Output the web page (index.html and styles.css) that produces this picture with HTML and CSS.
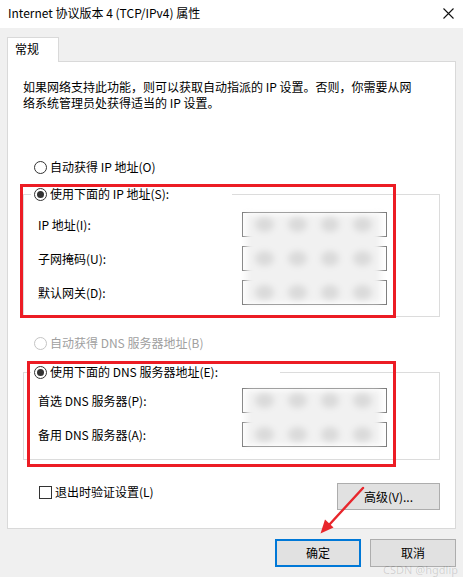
FILE: index.html
```html
<!DOCTYPE html>
<html lang="zh-CN">
<head>
<meta charset="utf-8">
<title>Internet 协议版本 4 (TCP/IPv4) 属性</title>
<link rel="stylesheet" href="styles.css">
</head>
<body>
<div class="window">
  <div class="titlebar">
    <span class="title">Internet 协议版本 4 (TCP/IPv4) 属性</span>
    <svg class="close" width="11" height="11" viewBox="0 0 11 11"><path d="M0.5 0.5 L10.5 10.5 M10.5 0.5 L0.5 10.5" stroke="#111" stroke-width="1.1" fill="none"/></svg>
  </div>
  <div class="main">
    <div class="tabs"><div class="tab">常规</div></div>
    <div class="panel">
      <p class="desc">如果网络支持此功能，则可以获取自动指派的 IP 设置。否则，你需要从网<br>络系统管理员处获得适当的 IP 设置。</p>
      <div class="radio-row auto-ip"><span class="radio"></span><span>自动获得 IP 地址(O)</span></div>
      <fieldset class="group ip-group">
        <legend class="radio-row legend-ip"><span class="radio checked"></span><span>使用下面的 IP 地址(S):</span></legend>
        <div class="fields ip-fields">
          <div class="labels">
            <span class="lbl">IP 地址(I):</span>
            <span class="lbl">子网掩码(U):</span>
            <span class="lbl">默认网关(D):</span>
          </div>
          <div class="inputs">
            <div class="ipbox"></div>
            <div class="ipbox"></div>
            <div class="ipbox"></div>
            <div class="blur">
              <span></span><span></span><span></span><span></span>
              <span></span><span></span><span></span><span></span>
              <span></span><span></span><span></span><span></span>
            </div>
          </div>
        </div>
      </fieldset>
      <div class="radio-row auto-dns disabled"><span class="radio"></span><span>自动获得 DNS 服务器地址(B)</span></div>
      <fieldset class="group dns-group">
        <legend class="radio-row legend-dns"><span class="radio checked"></span><span>使用下面的 DNS 服务器地址(E):</span></legend>
        <div class="fields dns-fields">
          <div class="labels">
            <span class="lbl">首选 DNS 服务器(P):</span>
            <span class="lbl">备用 DNS 服务器(A):</span>
          </div>
          <div class="inputs">
            <div class="ipbox"></div>
            <div class="ipbox"></div>
            <div class="blur">
              <span></span><span></span><span></span><span></span>
              <span></span><span></span><span></span><span></span>
            </div>
          </div>
        </div>
      </fieldset>
      <div class="bottom-row">
        <div class="check-row"><span class="checkbox"></span><span>退出时验证设置(L)</span></div>
        <button class="btn adv">高级(V)...</button>
      </div>
    </div>
    <div class="actions">
      <button class="btn primary">确定</button>
      <button class="btn">取消</button>
    </div>
  </div>

  <div class="mark mark-ip"></div>
  <div class="mark mark-dns"></div>
  <svg class="arrow" width="70" height="70" viewBox="0 0 70 70">
    <line x1="53" y1="8" x2="19" y2="45" stroke="#e8262c" stroke-width="2.4" stroke-linecap="round"/>
    <polygon points="10.5,53.5 15,39.5 23.5,47.5" fill="#e8262c"/>
  </svg>
  <div class="watermark">CSDN @hgdlip</div>
</div>
</body>
</html>
```

FILE: styles.css
```css
* { box-sizing: border-box; }

html, body {
  margin: 0;
  padding: 0;
  background: #f0f0f0;
}

body {
  font-family: "Noto Sans CJK SC", "Noto Sans", sans-serif;
  font-size: 12px;
  line-height: 16px;
  color: #000;
}

.window {
  position: relative;
  width: 463px;
  height: 577px;
  overflow: hidden;
  background: #f0f0f0;
}

.titlebar {
  height: 28px;
  background: #fff;
  display: flex;
  align-items: center;
  justify-content: space-between;
  padding: 0 9px 2px 8px;
}

.title { white-space: nowrap; }

.close { display: block; margin-top: 1px; }

.main {
  padding: 9px 7px 0 7px;
}

.tabs {
  display: flex;
}

.tab {
  position: relative;
  z-index: 1;
  width: 52px;
  height: 25px;
  margin-bottom: -1px;
  padding: 3px 0 0 7px;
  background: #fff;
  border: 1px solid #d9d9d9;
  border-bottom: 0;
}

.panel {
  width: 449px;
  height: 468px;
  background: #fff;
  border: 1px solid #d9d9d9;
  display: flex;
  flex-direction: column;
  align-items: flex-start;
}

.desc {
  margin: 17px 0 0 15px;
  white-space: nowrap;
}

.radio-row {
  display: flex;
  align-items: center;
  gap: 3px;
  height: 16px;
  white-space: nowrap;
}

.radio {
  width: 13px;
  height: 13px;
  border: 1px solid #333;
  border-radius: 50%;
  background: #fff;
  display: flex;
  align-items: center;
  justify-content: center;
  flex: none;
}

.radio.checked::after {
  content: "";
  width: 7px;
  height: 7px;
  border-radius: 50%;
  background: #333;
}

.auto-ip {
  margin: 48px 0 0 26px;
}

.auto-dns {
  margin: 18px 0 0 26px;
}

.disabled { color: #a0a0a0; }
.disabled .radio { border-color: #c4c4c4; }

.group {
  margin: 0 0 0 15px;
  width: 417px;
  min-width: 0;
  border: 1px solid #dcdcdc;
  padding: 0 0 0 14px;
}

.ip-group { margin-top: 11px; padding-bottom: 11px; }
.dns-group { margin-top: 13px; padding-bottom: 12px; }

legend.radio-row {
  margin-left: -7px;
  padding: 0 0 0 3px;
  background: #fff;
}

.legend-ip { width: 201px; }
.legend-dns { width: 249px; }

.fields {
  display: flex;
}

.ip-fields { margin-top: 10px; }
.dns-fields { margin-top: 8px; }

.labels {
  width: 204px;
  display: flex;
  flex-direction: column;
  gap: 9px;
}

.lbl {
  height: 25px;
  display: flex;
  align-items: center;
  white-space: nowrap;
}

.inputs {
  position: relative;
  width: 145px;
  display: flex;
  flex-direction: column;
  gap: 9px;
}

.ipbox {
  height: 25px;
  border: 1px solid #7a7a7a;
  background: #fff;
}

.blur {
  position: absolute;
  top: 2px;
  bottom: 2px;
  left: 4px;
  right: 6px;
  background: #f1f1f1;
  filter: blur(3px);
  display: grid;
  grid-template-columns: repeat(4, 1fr);
  grid-auto-rows: 21px;
  row-gap: 13px;
  padding: 0 2px;
}

.blur span {
  margin: 3px 7px;
  border-radius: 50%;
  background: #dadada;
}

.bottom-row {
  align-self: stretch;
  display: flex;
  justify-content: space-between;
  align-items: flex-start;
  margin-top: 23px;
  padding: 0 15px 0 31px;
}

.check-row {
  display: flex;
  align-items: center;
  gap: 3px;
  height: 16px;
  margin-top: 1px;
  white-space: nowrap;
}

.checkbox {
  width: 13px;
  height: 13px;
  border: 1px solid #333;
  background: #fff;
}

.btn {
  font: inherit;
  color: #000;
  background: #e1e1e1;
  border: 1px solid #adadad;
  border-radius: 0;
  padding: 0;
  display: flex;
  align-items: center;
  justify-content: center;
}

.adv {
  width: 103px;
  height: 27px;
}

.actions {
  display: flex;
  justify-content: flex-end;
  gap: 9px;
  margin-top: 10px;
}

.actions .btn {
  width: 86px;
  height: 28px;
}

.btn.primary {
  border: 2px solid #0078d7;
}

.mark {
  position: absolute;
  border: 3px solid #ec1c24;
}

.mark-ip {
  left: 20px;
  top: 184px;
  width: 376px;
  height: 134px;
}

.mark-dns {
  left: 27px;
  top: 361px;
  width: 369px;
  height: 106px;
}

.arrow {
  position: absolute;
  left: 310px;
  top: 480px;
}

.watermark {
  position: absolute;
  right: 5px;
  bottom: 2px;
  font-size: 11px;
  line-height: 10px;
  color: rgba(0, 0, 0, 0.14);
  font-family: "Noto Sans", sans-serif;
}
```
